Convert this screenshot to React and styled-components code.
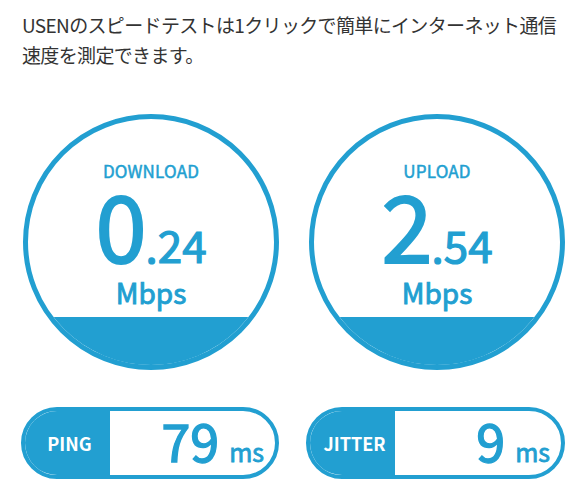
import React from "react";
import styled, { createGlobalStyle } from "styled-components";

const BLUE = "#229fd1";

const Global = createGlobalStyle`
  html, body { margin: 0; padding: 0; background: #fff; }
  body { font-family: "Noto Sans CJK JP", "Noto Sans", sans-serif; }
`;

const Page = styled.div`
  width: 586px;
  height: 495px;
  padding: 10px 21px 0 22px;
  box-sizing: border-box;
  overflow: hidden;
`;

const Intro = styled.p`
  margin: 0;
  font-size: 19px;
  line-height: 30px;
  color: #333;
  letter-spacing: -0.65px;
`;

const Meters = styled.div`
  display: grid;
  grid-template-columns: 256px 256px;
  justify-content: space-between;
  margin-top: 44px;
  padding-left: 1px;
`;

const Gauge = styled.div`
  width: 256px;
  height: 256px;
  box-sizing: border-box;
  border: 5px solid ${BLUE};
  border-radius: 50%;
  overflow: hidden;
  display: flex;
  flex-direction: column;
  align-items: center;
  color: ${BLUE};
`;

const Label = styled.div`
  margin-top: 40px;
  font-size: 17px;
  line-height: 24px;
  letter-spacing: 0.2px;
  -webkit-text-stroke: 0.5px ${BLUE};
`;

const Value = styled.div`
  display: flex;
  align-items: baseline;
  margin-top: 6px;
  line-height: 68px;
  -webkit-text-stroke: 2px ${BLUE};
`;

const Int = styled.span`
  font-size: 92px;
  letter-spacing: -1px;
`;

const Dec = styled.span`
  font-size: 44px;
  -webkit-text-stroke: 1.2px ${BLUE};
`;

const Unit = styled.div`
  font-size: 28px;
  line-height: 28px;
  -webkit-text-stroke: 0.9px ${BLUE};
`;

const Fill = styled.div`
  margin-top: auto;
  align-self: stretch;
  height: 48px;
  background: ${BLUE};
`;

const Stats = styled.div`
  display: grid;
  grid-template-columns: 258px 259px;
  justify-content: space-between;
  margin-top: 37px;
  margin-left: -1px;
`;

const Pill = styled.div`
  display: flex;
  height: 72px;
  box-sizing: border-box;
  border: 4px solid ${BLUE};
  border-radius: 36px;
  overflow: hidden;
`;

const PillLabel = styled.div`
  width: ${(p) => p.$w}px;
  flex: none;
  background: ${BLUE};
  color: #fff;
  font-size: 18px;
  font-weight: 700;
  display: flex;
  align-items: center;
  justify-content: center;
  padding-left: 4px;
`;

const PillValue = styled.div`
  flex: 1;
  display: flex;
  align-items: center;
  justify-content: flex-end;
  padding: 0 11px 0 0;
  color: ${BLUE};
`;

const Reading = styled.div`
  display: flex;
  align-items: baseline;
  line-height: 56px;
  margin-top: 4px;
`;

const Num = styled.span`
  font-size: 52px;
  -webkit-text-stroke: 1.4px ${BLUE};
`;

const Ms = styled.span`
  font-size: 25px;
  margin-left: 10px;
  -webkit-text-stroke: 0.8px ${BLUE};
`;

const meters = [
  { label: "DOWNLOAD", int: "0", dec: ".24" },
  { label: "UPLOAD", int: "2", dec: ".54" },
];

const stats = [
  { label: "PING", value: "79", w: 81 },
  { label: "JITTER", value: "9", w: 81 },
];

export default function App() {
  return (
    <Page>
      <Global />
      <Intro>
        USENのスピードテストは1クリックで簡単にインターネット通信速度を測定できます。
      </Intro>
      <Meters>
        {meters.map((m) => (
          <Gauge key={m.label}>
            <Label>{m.label}</Label>
            <Value>
              <Int>{m.int}</Int>
              <Dec>{m.dec}</Dec>
            </Value>
            <Unit>Mbps</Unit>
            <Fill />
          </Gauge>
        ))}
      </Meters>
      <Stats>
        {stats.map((s) => (
          <Pill key={s.label}>
            <PillLabel $w={s.w}>{s.label}</PillLabel>
            <PillValue>
              <Reading>
                <Num>{s.value}</Num>
                <Ms>ms</Ms>
              </Reading>
            </PillValue>
          </Pill>
        ))}
      </Stats>
    </Page>
  );
}
